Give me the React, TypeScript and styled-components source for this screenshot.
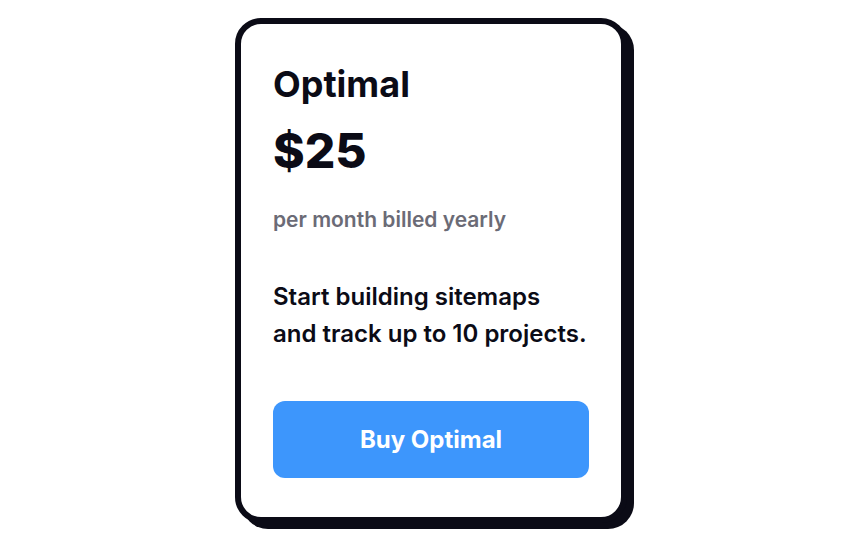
import React from "react"
import styled, { createGlobalStyle } from "styled-components"

const GlobalStyle = createGlobalStyle`
  html, body {
    margin: 0;
    padding: 0;
    background: #ffffff;
  }
  body {
    font-family: Inter, "Noto Sans", sans-serif;
    -webkit-font-smoothing: antialiased;
  }
`

const S = {
  Page: styled.div`
    box-sizing: border-box;
    width: 864px;
    height: 540px;
    padding-right: 2px;
    display: flex;
    align-items: center;
    justify-content: center;
  `,
  Card: styled.div`
    box-sizing: border-box;
    width: 392px;
    height: 505px;
    border: 6px solid #0b0b16;
    border-radius: 26px;
    box-shadow: 7px 6px 0 #0b0b16;
    background: #fff;
    padding: 38px 32px 39px;
    display: flex;
    flex-direction: column;
    color: #0b0b16;
  `,
  Title: styled.h2`
    margin: 0;
    font-size: 36px;
    font-weight: 700;
    line-height: 44px;
  `,
  Price: styled.div`
    margin-top: 17px;
    font-size: 48px;
    font-weight: 800;
    line-height: 56px;
  `,
  Billing: styled.div`
    margin-top: 27px;
    font-size: 21px;
    font-weight: 600;
    line-height: 28px;
    color: #6b6b76;
  `,
  Description: styled.p`
    margin: 44px 0 0;
    font-size: 24px;
    font-weight: 600;
    line-height: 37px;
  `,
  BuyButton: styled.button`
    margin-top: auto;
    height: 77px;
    width: 100%;
    border: none;
    border-radius: 12px;
    background: #3d96fc;
    color: #fff;
    font-family: Inter, "Noto Sans", sans-serif;
    font-size: 24px;
    font-weight: 700;
    cursor: pointer;
  `,
}

export default function App() {
  return (
    <>
      <GlobalStyle />
      <S.Page>
        <S.Card>
          <S.Title>Optimal</S.Title>
          <S.Price>$25</S.Price>
          <S.Billing>per month billed yearly</S.Billing>
          <S.Description>
            Start building sitemaps
            <br />
            and track up to 10 projects.
          </S.Description>
          <S.BuyButton>Buy Optimal</S.BuyButton>
        </S.Card>
      </S.Page>
    </>
  )
}
